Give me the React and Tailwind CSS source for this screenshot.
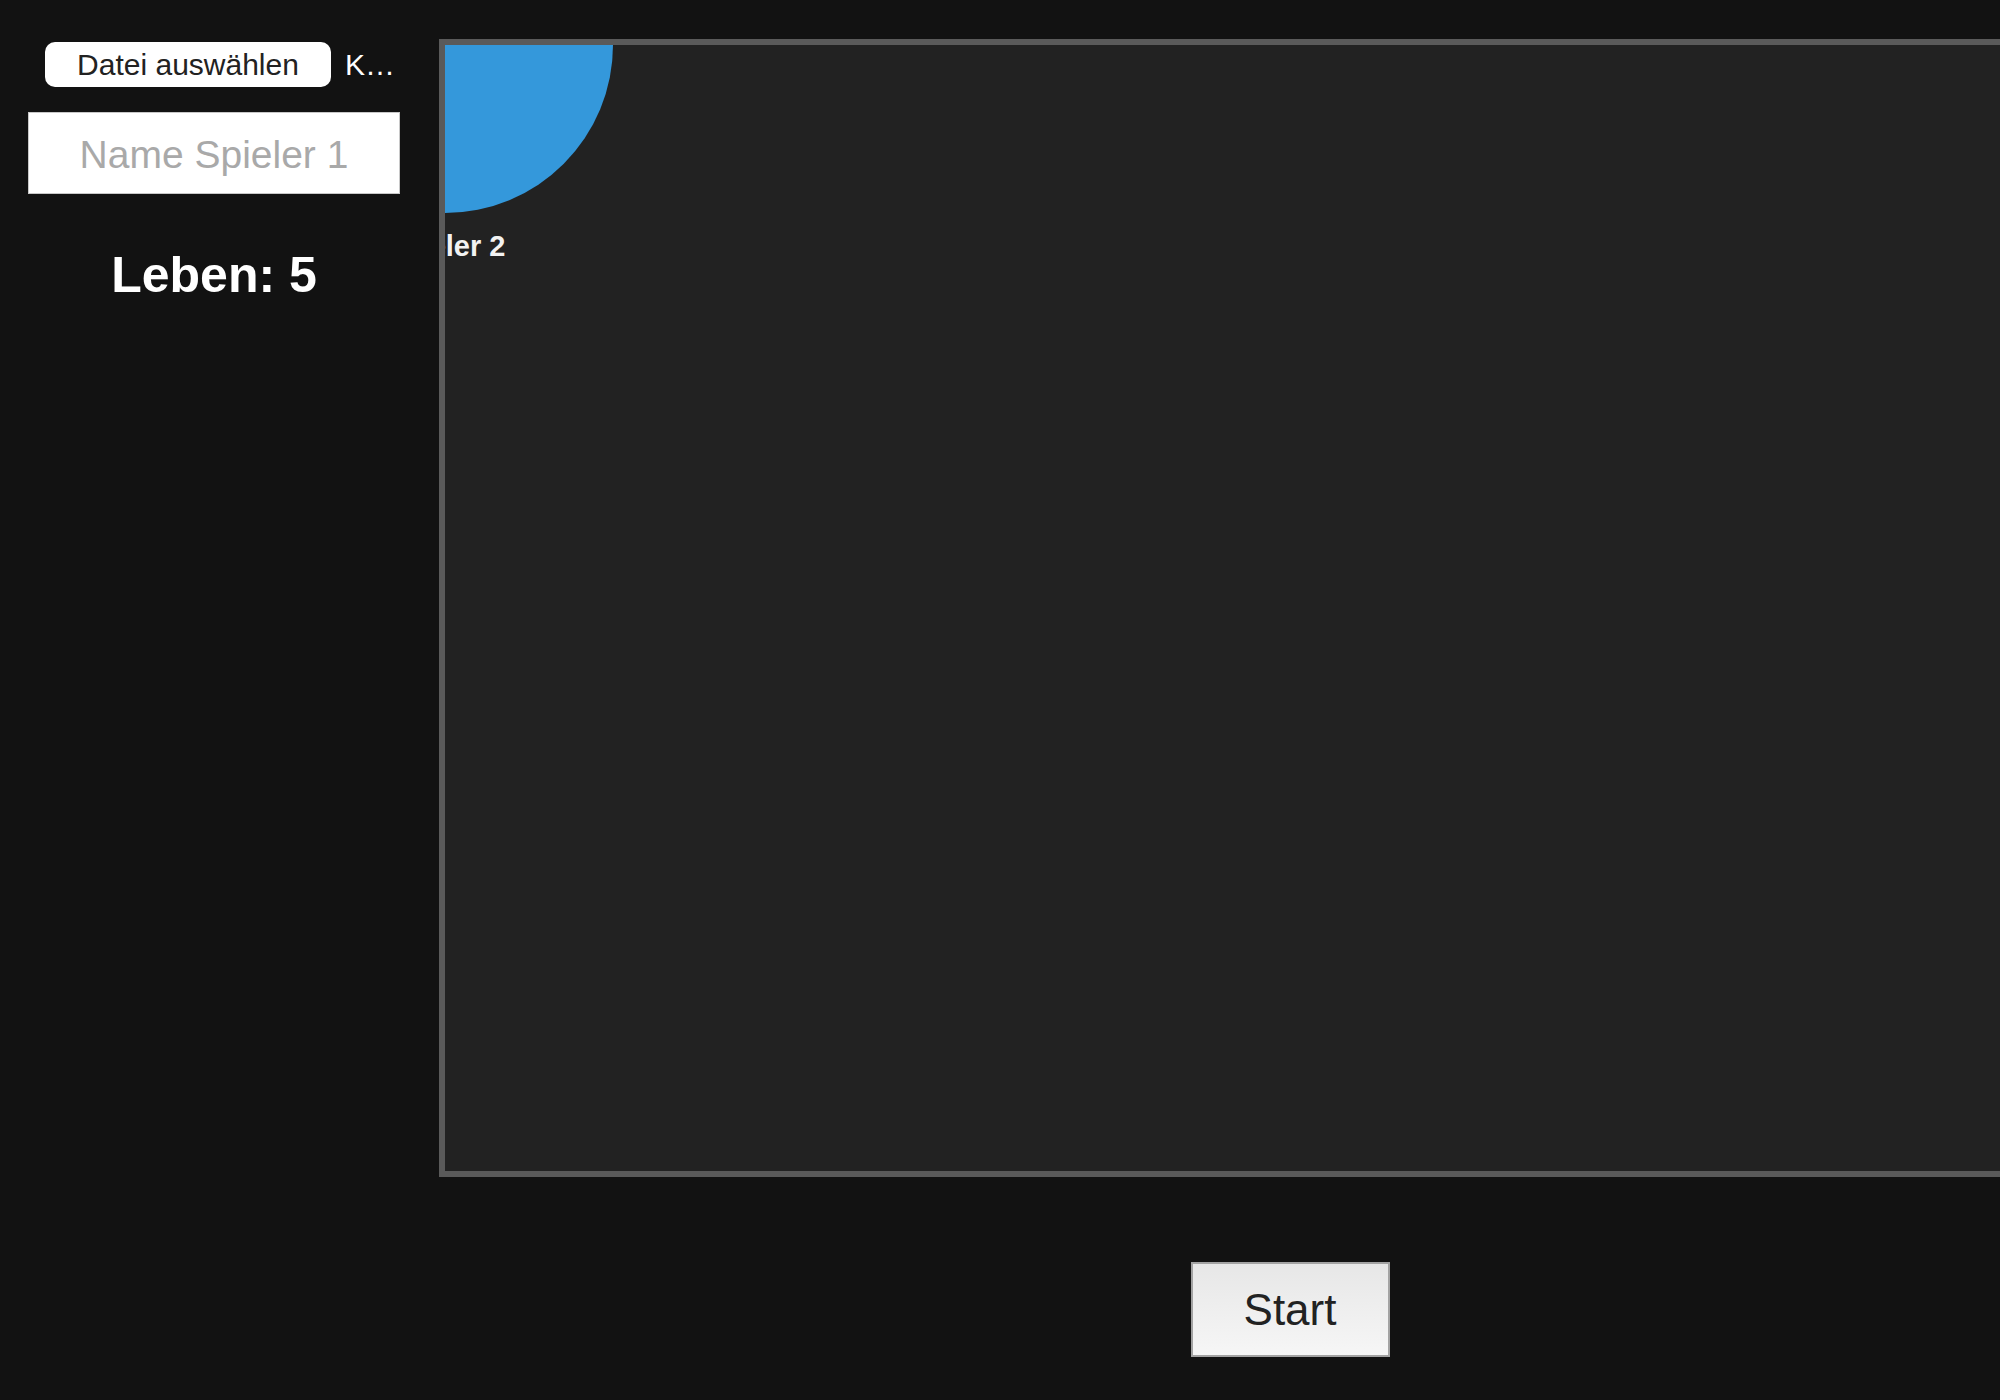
import React from 'react';

const App = () => {
    return (
        <div className="w-[2000px] h-[1400px] overflow-hidden bg-[#121212] font-['Liberation_Sans',Arial,sans-serif]">
            <div className="flex flex-col pt-[39px]">
                <div className="flex items-start">
                    {/* Seitenleiste Spieler 1 */}
                    <div className="ml-[28px] w-[372px] shrink-0 flex flex-col items-center">
                        <div className="self-start ml-[17px] mt-[3px] h-[45px] flex items-center gap-[14px]">
                            <button className="w-[286px] h-[45px] bg-white rounded-[10px] text-[#222] text-[30px] leading-none">
                                Datei auswählen
                            </button>
                            <span className="text-white text-[30px] leading-none">K…</span>
                        </div>
                        <input
                            type="text"
                            placeholder="Name Spieler 1"
                            className="mt-[25px] w-full h-[82px] pt-[3px] bg-white border border-[#c8c8c8] text-center text-[39px] text-[#222] placeholder:text-[#a9a9a9] outline-none"
                        />
                        <div className="mt-[56px] text-white font-bold text-[50px] leading-none">
                            Leben: 5
                        </div>
                    </div>

                    {/* Spielfeld */}
                    <div className="ml-[39px] w-[1702px] h-[1138px] shrink-0 border-[6px] border-[#5a5a5a] bg-[#222222] overflow-hidden">
                        <svg width="1690" height="1126" className="block">
                            <circle cx="0" cy="0" r="168" fill="#3498db" />
                            <text x="0" y="211" textAnchor="middle" fill="#f2f2f2" fontSize="29" fontWeight="bold" fontFamily="Liberation Sans, Arial, sans-serif">
                                Spieler 2
                            </text>
                        </svg>
                    </div>
                </div>

                <div className="flex">
                    <div className="ml-[439px] w-[1702px] shrink-0 flex justify-center">
                        <button className="mt-[85px] w-[199px] h-[95px] border-2 border-[#a3a3a3] bg-gradient-to-b from-[#e7e7e7] to-[#f6f6f6] text-[#222] text-[44px] leading-none">
                            Start
                        </button>
                    </div>
                </div>
            </div>
        </div>
    );
};

export default App;
